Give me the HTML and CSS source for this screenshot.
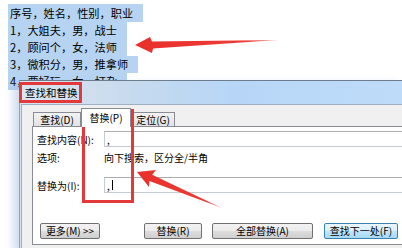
FILE: index.html
```html
<!DOCTYPE html>
<html lang="zh">
<head>
<meta charset="utf-8">
<title>查找和替换</title>
<link rel="stylesheet" href="styles.css">
</head>
<body>
<div class="doc">
  <div class="line">序号，姓名，性别，职业</div>
  <div class="line">1，大姐夫，男，战士</div>
  <div class="line">2，顾问个，女，法师</div>
  <div class="line">3，微积分，男，推拿师</div>
  <div class="line">4，要好玩，女，打杂</div>
</div>

<div class="dlg">
  <div class="caption">查找和替换</div>
  <div class="client">
    <div class="tabs">
      <div class="tab first">查找(D)</div>
      <div class="tab sel">替换(P)</div>
      <div class="tab">定位(G)</div>
    </div>
    <div class="page">
      <div class="row">
        <span class="lbl">查找内容(N):</span>
        <div class="edit">,</div>
      </div>
      <div class="row opts">
        <span class="lbl">选项:</span>
        <span>向下搜索，区分全/半角</span>
      </div>
      <div class="row repl">
        <span class="lbl">替换为(I):</span>
        <div class="edit">,<i class="caret"></i></div>
      </div>
      <div class="btns">
        <div class="btn more">更多(M) &gt;&gt;</div>
        <div class="btn b-rep">替换(R)</div>
        <div class="btn b-all">全部替换(A)</div>
        <div class="btn b-next dflt">查找下一处(F)</div>
      </div>
    </div>
  </div>
</div>

<!-- annotations drawn over the screenshot -->
<div class="mark m-title"></div>
<div class="mark m-tab"></div>
<svg class="arrows" width="402" height="248" viewBox="0 0 402 248">
  <defs>
    <linearGradient id="fade1" x1="135" y1="0" x2="280" y2="0" gradientUnits="userSpaceOnUse">
      <stop offset="0" stop-color="#e8302c"/>
      <stop offset="0.75" stop-color="#ee3b36"/>
      <stop offset="1" stop-color="#f59a96"/>
    </linearGradient>
    <linearGradient id="fade2" x1="137" y1="172" x2="222" y2="208" gradientUnits="userSpaceOnUse">
      <stop offset="0" stop-color="#e8302c"/>
      <stop offset="0.8" stop-color="#ee3b36"/>
      <stop offset="1" stop-color="#f7a8a4"/>
    </linearGradient>
  </defs>
  <polygon fill="url(#fade1)" points="135,45 150,37 152,41.5 278,40 153,48.5 152,53"/>
  <polygon fill="url(#fade2)" points="137,172 156,170 152.2,174.7 222,208 149.4,181.1 149,187"/>
</svg>
</body>
</html>
```

FILE: styles.css
```css
body {
  margin: 0;
  width: 402px;
  height: 248px;
  overflow: hidden;
  position: relative;
  background: #fff;
  font-family: "Noto Sans CJK SC", "Liberation Sans", sans-serif;
  color: #000;
}

/* selected text in the document */
.doc        { padding: 4px 0 0 8px; }
.line       { width: fit-content; height: 17px; line-height: 17px; padding: 0 10px 0 2px; background: #b6d4f2; font-size: 11.2px; }
.line:first-child { height: 18px; line-height: 19px; }

/* dialog window, cropped by the screenshot on the right and bottom */
.dlg {
  position: absolute;
  left: 19px;
  top: 80px;
  width: 382px;
  height: 167px;
  overflow: hidden;
  border-top: 1px solid #6d7d8e;
  border-left: 1px solid #8fa3b8;
  background: #d3e2f2;
  padding-left: 1px;
  box-shadow: -6px 4px 8px rgba(150, 180, 215, 0.45);
}
.caption {
  height: 23px;
  line-height: 23px;
  padding-left: 5px;
  font-size: 10.5px;
  margin-left: -1px;
  background: linear-gradient(to right, #dbe5ef 0%, #c6daee 30%, #b7d6f7 55%, #bedbf9 100%);
}
.client {
  border-top: 1px solid #9fb0c2;
  border-left: 1px solid #9fb0c2;
  background: #f0f0f0;
  padding: 3px 0 0 10px;
  height: 160px;
}

/* tabs */
.tabs       { display: flex; align-items: flex-end; height: 18px; }
.tab {
  box-sizing: border-box;
  height: 14px;
  border: 1px solid #898c95;
  border-bottom: none;
  background: linear-gradient(#f3f3f3, #e2e2e2);
  font-size: 10px;
  line-height: 13px;
  text-align: center;
  width: 44px;
}
.tab.first  { width: 48px; margin-left: 1px; }
.tab.sel    { width: 50px; height: 19px; margin-bottom: -1px; background: #fff; position: relative; z-index: 1; line-height: 17px; }

.page {
  box-sizing: border-box;
  width: 420px;
  height: 119px;
  border: 1px solid #898c95;
  background: #fff;
  padding: 4px 0 0 4px;
  font-size: 10px;
}
.row        { display: flex; align-items: center; height: 16px; }
.lbl        { width: 67px; flex: none; }
.opts       { margin-top: 3px; height: 14px; }
.repl       { margin-top: 13px; }
.edit {
  box-sizing: border-box;
  width: 320px;
  height: 16px;
  border: 1px solid #c5cbd3;
  border-top-color: #abadb3;
  line-height: 13px;
  padding-left: 2px;
  display: flex;
  align-items: center;
}
.caret      { display: inline-block; width: 1px; height: 10px; background: #000; margin-left: 2px; }

/* buttons */
.btns       { display: flex; margin-top: 30px; padding-left: 3px; }
.btn {
  box-sizing: border-box;
  flex: none;
  height: 16px;
  border: 1px solid #707070;
  border-radius: 2px;
  background: linear-gradient(#f2f2f2 0%, #ebebeb 50%, #dddddd 50%, #cfcfcf 100%);
  font-size: 10px;
  line-height: 14px;
  text-align: center;
}
.more       { width: 60px; }
.b-rep      { width: 58px; margin-left: 44px; }
.b-all      { width: 101px; margin-left: 10px; }
.b-next     { width: 74px; margin-left: 11px; }
.btn.dflt   { border-color: #3c7fb1; background: linear-gradient(#eaf6fd 0%, #d9f0fc 50%, #bee6fd 50%, #a7d9f5 100%); }

/* red annotation boxes and arrows */
.mark       { position: absolute; box-sizing: border-box; border: 3px solid #e3393a; }
.m-title    { left: 19px; top: 82px; width: 63px; height: 21px; }
.m-tab      { left: 82px; top: 109px; width: 52px; height: 94px; }
.arrows     { position: absolute; left: 0; top: 0; pointer-events: none; }
```
